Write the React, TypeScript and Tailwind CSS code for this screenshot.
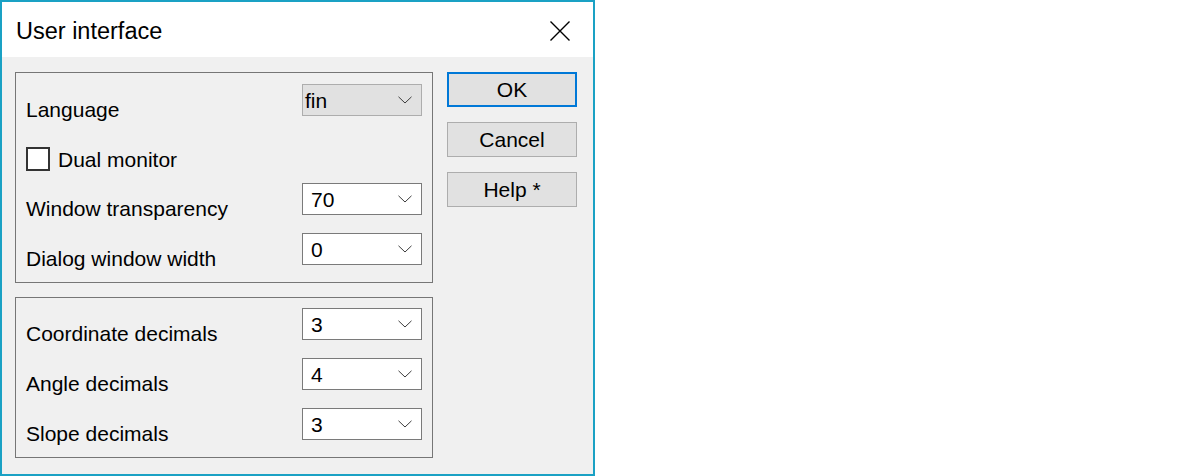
import { ReactNode } from "react";

const font = { fontFamily: '"Liberation Sans", Arial, sans-serif' };

function Chevron() {
  return (
    <svg width="14" height="8" viewBox="0 0 14 8" className="shrink-0">
      <path d="M0.5 0.8 L7 7 L13.5 0.8" fill="none" stroke="#3c3c3c" strokeWidth="1" />
    </svg>
  );
}

interface ComboProps {
  value: string;
  list?: boolean;
}

// list = gray drop-down list style, otherwise white editable combo
function Combo({ value, list }: ComboProps) {
  return (
    <div
      className={
        list
          ? "flex h-[32px] w-[120px] items-center justify-between border border-[#adadad] bg-[#e1e1e1] pl-[2px] pr-[9px]"
          : "flex h-[32px] w-[120px] items-center justify-between border border-[#7a7a7a] bg-white pl-[8px] pr-[9px]"
      }
    >
      <span className="pt-[1px] text-[21px] leading-[24px] text-black">{value}</span>
      <Chevron />
    </div>
  );
}

interface RowProps {
  label: string;
  value: string;
  list?: boolean;
  last?: boolean;
}

function Row({ label, value, list, last }: RowProps) {
  return (
    <div className={last ? "flex h-[32px] justify-between" : "flex h-[50px] justify-between"}>
      <span className="pt-[14px] text-[21px] leading-[24px] text-black">{label}</span>
      <Combo value={value} list={list} />
    </div>
  );
}

function Group({ children, className }: { children: ReactNode; className: string }) {
  return (
    <div className={"flex w-[418px] flex-col border border-[#767676] pl-[10px] pr-[10px] " + className}>
      {children}
    </div>
  );
}

function DlgButton({ children, primary }: { children: ReactNode; primary?: boolean }) {
  return (
    <button
      className={
        primary
          ? "flex h-[35px] w-[130px] items-center justify-center border-2 border-[#0078d7] bg-[#e1e1e1] text-[21px] leading-[24px] text-black"
          : "flex h-[35px] w-[130px] items-center justify-center border border-[#adadad] bg-[#e1e1e1] text-[21px] leading-[24px] text-black"
      }
    >
      {children}
    </button>
  );
}

export default function App() {
  return (
    <div className="h-[476px] w-[1200px] bg-white" style={font}>
      <div className="flex h-[476px] w-[595px] flex-col border-2 border-[#1aa1c4]">
        {/* title bar */}
        <div className="flex h-[55px] items-center justify-between bg-white pl-[14px] pr-[23px] pt-[2px]">
          <span className="text-[23.5px] leading-[28px] text-black">User interface</span>
          <svg width="20" height="20" viewBox="0 0 20 20">
            <path d="M0.5 0.5 L19.5 19.5 M19.5 0.5 L0.5 19.5" stroke="#000" strokeWidth="1.4" />
          </svg>
        </div>

        {/* body */}
        <div className="flex flex-1 gap-[14px] bg-[#f0f0f0] pl-[13px] pt-[15px]">
          <div className="flex flex-col gap-[14px]">
            <Group className="h-[211px] pt-[11px]">
              <Row label="Language" value="fin" list />
              <div className="flex h-[49px] items-center gap-[8px] pt-[1px]">
                <div className="h-[24px] w-[24px] border-2 border-[#333333] bg-white" />
                <span className="pt-[2px] text-[21px] leading-[24px] text-black">Dual monitor</span>
              </div>
              <Row label="Window transparency" value="70" />
              <Row label="Dialog window width" value="0" last />
            </Group>
            <Group className="h-[161px] pt-[10px]">
              <Row label="Coordinate decimals" value="3" />
              <Row label="Angle decimals" value="4" />
              <Row label="Slope decimals" value="3" last />
            </Group>
          </div>

          <div className="flex flex-col gap-[15px]">
            <DlgButton primary>OK</DlgButton>
            <DlgButton>Cancel</DlgButton>
            <DlgButton>Help *</DlgButton>
          </div>
        </div>
      </div>
    </div>
  );
}
